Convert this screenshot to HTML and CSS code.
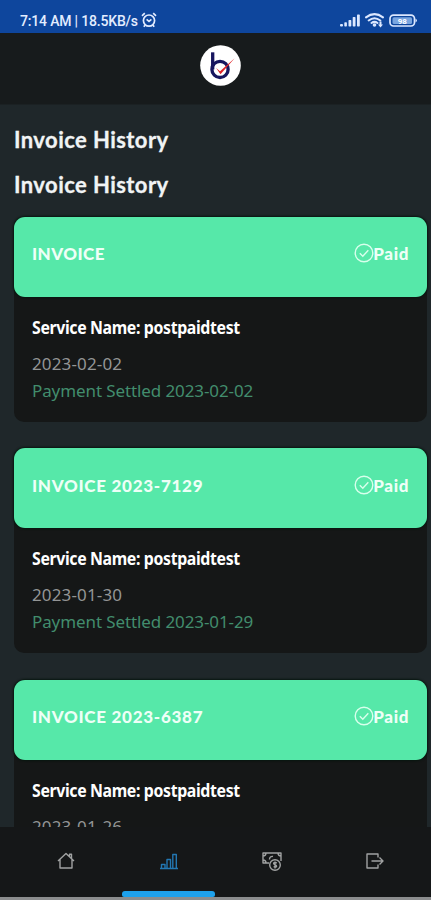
FILE: index.html
```
<!DOCTYPE html>
<html lang="en">
<head>
<meta charset="utf-8">
<title>Invoice History</title>
<link rel="stylesheet" href="styles.css">
</head>
<body>
<svg class="defs" width="0" height="0"><symbol id="check" viewBox="0 0 20 20"><circle cx="10" cy="10" r="8.8"/><path d="M5.8 10.2l3 3 5.5-6"/></symbol></svg>
<div class="phone">
  <header class="status">
    <span class="clock">7:14 AM | 18.5KB/s</span>
    <svg class="alarm" width="16" height="16" viewBox="0 0 16 16"><circle cx="8" cy="8.6" r="5.6"/><path d="M1 3.8L3.8 1.2M15 3.8l-2.8-2.6M5.6 7.4L8 9.3l2.4-1.9M4 13.2l-1.2 1.6M12 13.2l1.2 1.6"/></svg>
    <svg class="signals" width="80" height="18" viewBox="0 0 80 18"><g fill="#dce8ff"><rect x="0" y="13" width="3" height="2.5" rx="1"/><rect x="4.3" y="11.2" width="2.6" height="4.3" rx=".7"/><rect x="8.5" y="9" width="2.8" height="6.5" rx=".7"/><rect x="12.7" y="6" width="2.8" height="9.5" rx=".7"/><rect x="17" y="3.5" width="2.8" height="12" rx=".7"/><circle cx="34.5" cy="14" r="1.8"/><path d="M39.5 10.5h2v3h1.5L40.5 16.5 38 13.5h1.5z"/></g><g fill="none" stroke="#dce8ff" stroke-width="2" stroke-linecap="round"><path d="M26 6.4q8.5-6.5 17 0M28.7 9.5q5.8-4.6 11.6 0M31.5 12q3-2.3 6 0"/><rect x="50" y="4.2" width="24.5" height="10.8" rx="3.5" stroke-width="1.7"/></g><rect x="52.5" y="6.3" width="19.5" height="6.6" rx="1.5" fill="#79a5df"/><path d="M75.5 7.5q3 2 0 4z" fill="#dce8ff"/><text x="62.3" y="12.7" class="charge">98</text></svg>
  </header>
  <div class="brand">
    <svg width="41" height="41" viewBox="0 0 42 42"><circle cx="21" cy="21" r="20.8" fill="#fff"/><path d="M13 7.5V25" stroke="#17165f" stroke-width="3.4" fill="none"/><circle cx="20.5" cy="25" r="8.3" stroke="#17165f" stroke-width="3.4" fill="none"/><path d="M16.500 23.500l4 3.300L35.500 13.500 21 30z" fill="#df2529"/></svg>
  </div>
  <main>
    <h1>Invoice History</h1>
    <h2>Invoice History</h2>
    <article class="card">
      <div class="card-head"><b class="number">INVOICE</b><span class="paid"><svg width="20" height="20"><use href="#check"/></svg><b>Paid</b></span></div>
      <div class="card-body"><p class="service">Service Name: postpaidtest</p><p class="date">2023-02-02</p><p class="settled">Payment Settled 2023-02-02</p></div>
    </article>
    <article class="card">
      <div class="card-head"><b class="number long">INVOICE 2023-7129</b><span class="paid"><svg width="20" height="20"><use href="#check"/></svg><b>Paid</b></span></div>
      <div class="card-body"><p class="service">Service Name: postpaidtest</p><p class="date">2023-01-30</p><p class="settled">Payment Settled 2023-01-29</p></div>
    </article>
    <article class="card">
      <div class="card-head"><b class="number long">INVOICE 2023-6387</b><span class="paid"><svg width="20" height="20"><use href="#check"/></svg><b>Paid</b></span></div>
      <div class="card-body"><p class="service">Service Name: postpaidtest</p><p class="date">2023-01-26</p></div>
    </article>
  </main>
  <nav>
    <a><svg width="20" height="20" viewBox="0 0 20 20"><path d="M2 10l8-7.500 8 7.500M4 8.500V17h12V8.500M13.500 5.500V3.300H15.500V7.500"/></svg></a>
    <a class="active"><svg width="20" height="20" viewBox="0 0 20 20"><path d="M1 17.500h18M2.500 17.500v-4H6v4M8 17.500V8.500h3.500v9M13.800 17.500v-14h3.500v14"/></svg></a>
    <a><svg width="22" height="22" viewBox="0 0 22 22"><path d="M8 13H2V3h18v8M2 6q3 0 3-3M20 6q-3 0-3-3M2 10q3 0 3 3M12 6.500c-2-.5-3.500 1-3.500 3"/><circle cx="14" cy="15" r="5.300"/><path d="M15.800 13q-3-1.500-3.200.5c0 1.500 3 1 3 2.700q-.5 1.500-3 .5M14 11.500v7"/></svg></a>
    <a><svg width="20" height="20" viewBox="0 0 20 20"><path d="M13 6.500V3H2v14h11v-3.500M6.500 10H18M14.500 6.500L18 10l-3.500 3.500"/></svg></a>
  </nav>
  <footer></footer>
</div>
</body>
</html>
```
FILE: styles.css
```
* { box-sizing: border-box; }
body { margin: 0; background: #1e272a; }
.defs { display: block; }
h1, h2, p { margin: 0; }
.phone { width: 431px; height: 900px; display: flex; flex-direction: column; overflow: hidden; background: #1f272a; color: #fff; font-family: Lato, sans-serif; }
.status { flex: 0 0 33px; display: flex; align-items: center; padding: 8px 13px 0 20px; background: #0e469d; color: #e4edff; font: 500 14px Roboto, sans-serif; }
.clock { width: 119px; white-space: nowrap; letter-spacing: -.18px; }
.alarm { margin-left: 2px; position: relative; top: -1px; fill: none; stroke: #e4edff; stroke-width: 1.7; }
.signals { margin-left: auto; position: relative; top: -1px; left: 2px; }
.charge { fill: #fff; font: 700 8px Roboto, sans-serif; text-anchor: middle; }
.brand { flex: 0 0 72px; display: flex; justify-content: center; padding: 12px 0 0 9px; background: #171b1c; border-bottom: 1px solid #1b2123; }
main { flex: 1; min-height: 0; overflow: hidden; padding: 17px 4px 0 14px; }
h1, h2 { height: 36px; line-height: 35px; font-size: 22px; font-weight: 700; color: #f1f4f5; letter-spacing: .43px; white-space: nowrap; -webkit-text-stroke: .3px #f1f4f5; }
h2 { margin: 9px 0 13.5px; }
.card { height: 205px; margin-bottom: 26.5px; border-radius: 10px; background: #151717; }
.card-head { height: 80px; display: flex; align-items: center; justify-content: space-between; padding: 0 18px 6px 18px; border-radius: 11px; background: #56e8a9; box-shadow: 0 0 2px 1px #07160f; font-size: 17px; color: #eefff7; }
.number { letter-spacing: .45px; font-weight: 900; }
.long { letter-spacing: .72px; }
.paid { display: flex; align-items: center; }
.paid b { font-weight: 900; letter-spacing: .6px; margin-left: -1px; }
.paid svg { position: relative; top: -.5px; fill: none; stroke: #d8ffec; stroke-width: 1.4; }
.card-body { padding: 18px 18px 0; font-family: "Noto Sans", sans-serif; font-size: 17px; white-space: nowrap; }
.service { height: 26px; line-height: 26px; font-weight: 700; letter-spacing: -.4px; transform: scaleX(.935); transform-origin: left; }
.date { height: 27px; margin-top: 9px; line-height: 27px; color: #939595; letter-spacing: .15px; }
.settled { height: 27px; line-height: 27px; color: #428d6d; letter-spacing: -.1px; }
nav { flex: 0 0 70px; display: grid; grid-template-columns: repeat(4, 103px); padding-left: 14px; background: #151718; }
nav a { height: 70px; padding-bottom: 2px; display: flex; flex-direction: column; align-items: center; justify-content: center; }
nav svg { fill: none; stroke: #a0a2a2; stroke-width: 1.4; stroke-linejoin: round; }
.active { padding: 24px 0 0; justify-content: space-between; }
.active::after { content: ""; width: 93px; height: 6px; border-radius: 3px 3px 2px 2px; background: #1da1ec; }
.active svg { stroke: #2377b2; }
footer { flex: 0 0 3px; background: #8b8d8e; }
```
